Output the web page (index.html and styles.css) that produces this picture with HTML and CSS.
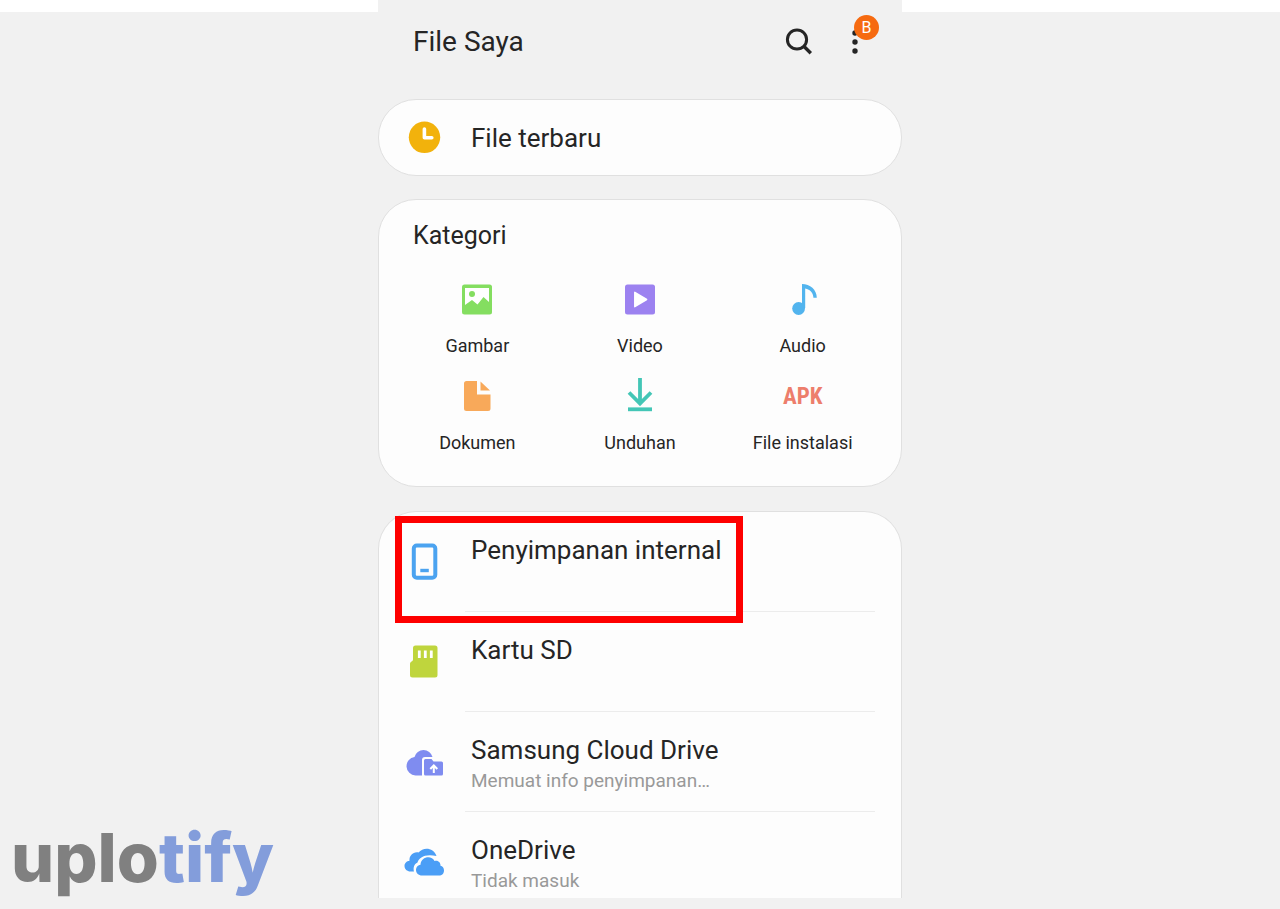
FILE: index.html
```html
<!DOCTYPE html>
<html lang="id">
<head>
    <meta charset="UTF-8">
    <meta name="viewport" content="width=device-width, initial-scale=1.0">
    <title>File Saya</title>
    <link rel="stylesheet" href="styles.css">
</head>
<body>
    <div class="page">
        <div class="brand"><span class="brand-dark">uplo</span><span class="brand-blue">tify</span></div>

        <main class="phone">
            <header class="topbar">
                <h1>File Saya</h1>
                <button type="button" class="icon-button" aria-label="Cari">
                    <svg width="30" height="30" viewBox="0 0 30 30" fill="none" stroke="#252525" stroke-width="3">
                        <circle cx="13" cy="12.5" r="9.6"/>
                        <path d="M19.8 19.3l7 7" stroke-width="3.4"/>
                    </svg>
                </button>
                <button type="button" class="icon-button more" aria-label="Opsi lainnya">
                    <svg width="6" height="24" viewBox="0 0 6 24" fill="#252525">
                        <circle cx="3" cy="3" r="2.7"/>
                        <circle cx="3" cy="12" r="2.7"/>
                        <circle cx="3" cy="21" r="2.7"/>
                    </svg>
                    <span class="badge">B</span>
                </button>
            </header>

            <a href="#" class="card recent">
                <svg class="row-icon" width="40" height="40" viewBox="0 0 40 40">
                    <circle cx="20.5" cy="19.3" r="15.7" fill="#f2b20c"/>
                    <path d="M20.4 11v8.8h7.4" fill="none" stroke="#fff" stroke-width="3.6" stroke-linecap="round" stroke-linejoin="round"/>
                </svg>
                <span class="row-title">File terbaru</span>
            </a>

            <section class="card categories">
                <h2>Kategori</h2>
                <div class="category-grid">
                    <a href="#" class="category">
                        <svg width="40" height="40" viewBox="0 0 40 40">
                            <rect x="5" y="4.5" width="30" height="30" rx="2.5" fill="#84de60"/>
                            <path d="M8 8h24v14l-5.500-5-6 7.500-5.500-4.500L8 25z" fill="#fff"/>
                            <circle cx="15" cy="14" r="3" fill="#84de60"/>
                        </svg>
                        <span>Gambar</span>
                    </a>
                    <a href="#" class="category">
                        <svg width="40" height="40" viewBox="0 0 40 40">
                            <rect x="5" y="4.5" width="30" height="30" rx="2.5" fill="#9c82f0"/>
                            <path d="M14.8 12.3v14.4l11.8-7.200z" fill="#fff" stroke="#fff" stroke-width="1.5" stroke-linejoin="round"/>
                        </svg>
                        <span>Video</span>
                    </a>
                    <a href="#" class="category">
                        <svg width="40" height="40" viewBox="0 0 40 40">
                            <circle cx="15.6" cy="28.5" r="6.400" fill="#52b4ee"/>
                            <path d="M19 28V4c8 0 14.800 5.500 14.800 13.800h-3.400c0-4.800-3.200-8.400-8.200-9.300V28z" fill="#52b4ee"/>
                        </svg>
                        <span>Audio</span>
                    </a>
                    <a href="#" class="category">
                        <svg width="40" height="40" viewBox="0 0 40 40" fill="#f8a95a">
                            <path d="M9.500 4H20v13.500h13.500v14a2.500 2.500 0 0 1-2.500 2.500H9.500A2.500 2.500 0 0 1 7 31.500v-25A2.500 2.500 0 0 1 9.500 4z"/>
                            <path d="M23.500 4.500l9.500 9h-9.500z"/>
                        </svg>
                        <span>Dokumen</span>
                    </a>
                    <a href="#" class="category">
                        <svg width="40" height="40" viewBox="0 0 40 40" fill="none" stroke="#43c6b6" stroke-width="3.8">
                            <path d="M20 1v26M9 15.500l11 11 11-11"/>
                            <path d="M8 32.300h24"/>
                        </svg>
                        <span>Unduhan</span>
                    </a>
                    <a href="#" class="category">
                        <b class="apk">APK</b>
                        <span>File instalasi</span>
                    </a>
                </div>
            </section>

            <ul class="card storage">
                <li>
                    <a href="#" class="row">
                        <svg class="row-icon" width="40" height="40" viewBox="0 0 40 40" fill="none" stroke="#4ba3f0">
                            <rect x="9.8" y="3.5" width="21.5" height="32.3" rx="3" stroke-width="4"/>
                            <path d="M16.300 28.500h8.500" stroke-width="3.4"/>
                        </svg>
                        <span class="row-text"><span class="row-title">Penyimpanan internal</span></span>
                    </a>
                    <div class="highlight"></div>
                </li>
                <li>
                    <a href="#" class="row">
                        <svg class="row-icon" width="40" height="40" viewBox="0 0 40 40">
                            <path d="M11.500 3.500H31a2.500 2.500 0 0 1 2.500 2.500v27A2.500 2.500 0 0 1 31 35.500H8.500A2.500 2.500 0 0 1 6 33V22c0-2.500 3-2.500 3-4.500V6A2.500 2.500 0 0 1 11.500 3.500z" fill="#bfd53d"/>
                            <path d="M15.300 8.500V16M21.300 8.500V16M27.300 8.500V16" stroke="#fff" stroke-width="2.8"/>
                        </svg>
                        <span class="row-text"><span class="row-title">Kartu SD</span></span>
                    </a>
                </li>
                <li>
                    <a href="#" class="row">
                        <svg class="row-icon" width="40" height="40" viewBox="0 0 40 40">
                            <path d="M11.500 33.500A9.300 9.300 0 0 1 10.500 15a9.300 9.300 0 0 1 18 0H21a3 3 0 0 0-3 3V33.500z" fill="#7f8cf0"/>
                            <path d="M21.500 17h6l2 2.500h8a1.500 1.500 0 0 1 1.500 1.500v11a1.500 1.500 0 0 1-1.500 1.500h-16a1.500 1.500 0 0 1-1.500-1.500v-13.500a1.500 1.500 0 0 1 1.500-1.500z" fill="#7f8cf0"/>
                            <path d="M29.800 31v-7M26.300 27l3.500-3.500 3.500 3.500" fill="none" stroke="#fff" stroke-width="2"/>
                        </svg>
                        <span class="row-text">
                            <span class="row-title">Samsung Cloud Drive</span>
                            <span class="row-note">Memuat info penyimpanan…</span>
                        </span>
                    </a>
                </li>
                <li>
                    <a href="#" class="row">
                        <svg class="row-icon" width="40" height="40" viewBox="0 0 40 40" fill="#4b9ef6">
                            <path d="M10 29.500H6.500C3 29.500.5 27 .5 24c0-3 2.200-5 5-5.300C5 13.500 9.500 9.500 14.500 10.500 19.500 4.500 29.500 5.500 32.500 14 21 11.500 15 15.500 13.500 20.500 10 22 9 26 10 29.500z"/>
                            <path d="M18 33.500c-3.500 0-6-2.500-6-5.500s2.300-5 4.500-5.200c.3-8 11-10 14-3.800 3.500-1.200 6.300 1.500 6 4.800 2 .5 3.500 2.200 3.500 4.700 0 3-2 5-5 5z"/>
                        </svg>
                        <span class="row-text">
                            <span class="row-title">OneDrive</span>
                            <span class="row-note">Tidak masuk</span>
                        </span>
                    </a>
                </li>
            </ul>
        </main>
    </div>
</body>
</html>
```
FILE: styles.css
```css
* {
    box-sizing: border-box;
}
body {
    margin: 0;
    font-family: Roboto, Arial, sans-serif;
    color: #252525;
    background: linear-gradient(#fff 12px, #f1f1f1 12px);
}
a {
    color: inherit;
    text-decoration: none;
}
.page {
    display: grid;
    grid-template-columns: 1fr minmax(auto, 524px) 1fr;
    height: 100vh;
    padding-bottom: 11px;
}
.brand {
    align-self: end;
    padding: 0 0 1px 11px;
    font-family: Inter, sans-serif;
    font-size: 68px;
    font-weight: 800;
    line-height: 80px;
}
.brand-dark {
    color: #808080;
}
.brand-blue {
    color: #839ddb;
}
.phone {
    display: flex;
    flex-direction: column;
    min-height: 0;
    background: #f1f1f1;
    overflow: hidden;
}
.topbar {
    display: flex;
    align-items: center;
    flex-shrink: 0;
    height: 99px;
    padding: 0 44px 16px 35px;
}
h1 {
    flex: 1;
    margin: 0;
    font-size: 28px;
    font-weight: 400;
}
.icon-button {
    display: flex;
    padding: 0;
    border: none;
    background: none;
    cursor: pointer;
}
.more {
    position: relative;
    margin-left: 38px;
}
.badge {
    position: absolute;
    top: -15px;
    left: 2px;
    width: 25px;
    height: 25px;
    border-radius: 50%;
    background: #f66a10;
    color: #fff;
    font-family: Roboto, Arial, sans-serif;
    font-size: 16px;
    line-height: 26px;
    text-align: center;
}
.card {
    flex-shrink: 0;
    border: 1px solid #e0e0e0;
    border-radius: 38px;
    background: #fdfdfd;
}
.recent {
    display: flex;
    align-items: center;
    gap: 27px;
    height: 77px;
    padding-left: 25px;
}
.row-icon {
    flex-shrink: 0;
}
.row-title {
    font-size: 26px;
    line-height: 34px;
}
.categories {
    margin: 23px 0 24px;
    padding: 19px 17px 31px;
}
h2 {
    margin: 0 0 27px 17px;
    font-size: 25px;
    font-weight: 400;
    line-height: 34px;
}
.category-grid {
    display: grid;
    grid-template-columns: repeat(3, 1fr);
    row-gap: 19px;
}
.category {
    display: flex;
    flex-direction: column;
    align-items: center;
    gap: 14px;
    font-size: 18px;
    line-height: 24px;
}
.apk {
    color: #ed7e6c;
    font-family: "Roboto Condensed", "Liberation Sans Narrow", Roboto, sans-serif;
    font-size: 23px;
    line-height: 40px;
}
.storage {
    flex: 1 0 auto;
    margin: 0;
    padding: 0;
    border-bottom: none;
    border-radius: 38px 38px 0 0;
    list-style: none;
}
.storage li {
    position: relative;
}
.row {
    display: flex;
    align-items: center;
    gap: 21px;
    height: 100px;
    padding: 0 26px 0 25px;
}
.row-text {
    display: flex;
    flex: 1;
    flex-direction: column;
    height: 100%;
    padding: 21px 0 0 6px;
    border-bottom: 1px solid #ececec;
}
.row-note {
    color: #999;
    font-size: 19px;
    line-height: 28px;
}
/* red frame around the selected storage */
.highlight {
    position: absolute;
    top: 4px;
    left: 16px;
    width: 348px;
    height: 107px;
    border: 7px solid #fe0000;
    pointer-events: none;
}
```
